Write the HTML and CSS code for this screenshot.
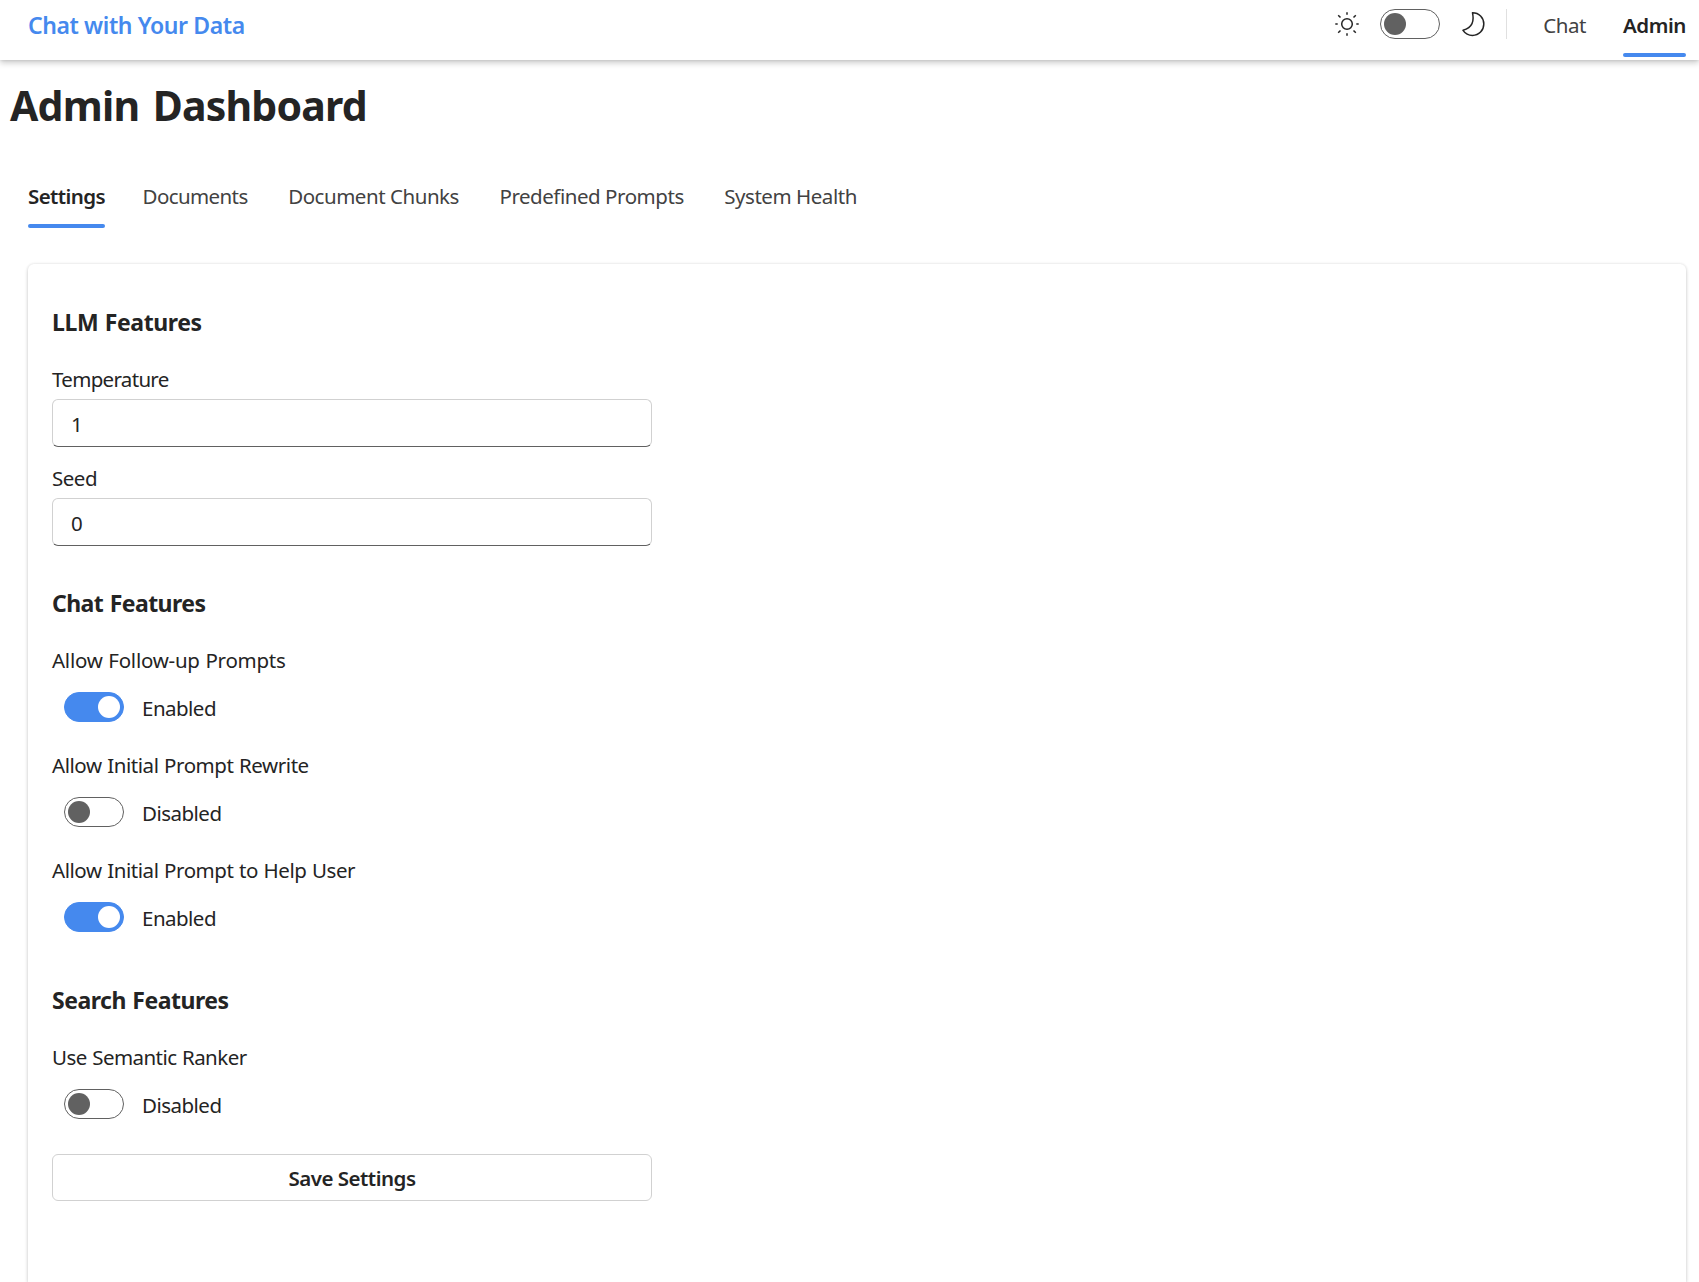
FILE: index.html
```html
<!DOCTYPE html>
<html lang="en">
<head>
<meta charset="utf-8">
<title>Chat with Your Data</title>
<link rel="stylesheet" href="styles.css">
</head>
<body>
<header class="topbar">
  <div class="brand">Chat with Your Data</div>
  <div class="theme">
    <svg class="sun" viewBox="0 0 24 24"><circle cx="12" cy="12" r="5.3"/><path d="M12 .3v2.4M12 21.3v2.4M.3 12h2.4M21.3 12h2.4M3.2 3.2l2.3 2.3M18.500 18.500l2.300 2.300M3.200 20.800l2.300-2.300M18.500 5.500l2.300-2.300"/></svg>
    <span class="switch"></span>
    <svg class="moon" viewBox="0 0 24 26"><path d="M10.500 1.800C17 1.800 21.800 6.700 21.800 13S17 24.400 10.500 24.400C6.500 24.400 3.200 22.500 1 19.300 5.500 17.900 8.500 15.900 10 12.600 11.500 9.200 11.300 5.500 10.500 1.800Z"/></svg>
  </div>
  <nav class="nav">
    <a class="tab chat-link">Chat</a>
    <a class="tab selected">Admin</a>
  </nav>
</header>
<main>
  <h1 class="title">Admin Dashboard</h1>
  <nav class="tabs">
    <a class="tab selected">Settings</a>
    <a class="tab documents">Documents</a>
    <a class="tab">Document Chunks</a>
    <a class="tab">Predefined Prompts</a>
    <a class="tab">System Health</a>
  </nav>
  <section class="card">
    <h2 class="heading llm">LLM Features</h2>
    <label class="label temperature">Temperature</label>
    <div class="input">1</div>
    <label class="label seed">Seed</label>
    <div class="input">0</div>
    <h2 class="heading chat">Chat Features</h2>
    <div class="label follow-up">Allow Follow-up Prompts</div>
    <div class="option"><span class="switch on"></span><span class="state">Enabled</span></div>
    <div class="label">Allow Initial Prompt Rewrite</div>
    <div class="option"><span class="switch"></span><span class="state">Disabled</span></div>
    <div class="label">Allow Initial Prompt to Help User</div>
    <div class="option"><span class="switch on"></span><span class="state">Enabled</span></div>
    <h2 class="heading search">Search Features</h2>
    <div class="label ranker">Use Semantic Ranker</div>
    <div class="option"><span class="switch"></span><span class="state">Disabled</span></div>
    <button class="save">Save Settings</button>
  </section>
</main>
</body>
</html>
```
FILE: styles.css
```css
* { box-sizing: border-box; }
body {
  margin: 0;
  height: 1282px;
  overflow: hidden;
  display: flex;
  flex-direction: column;
  background: #fff;
  color: #242424;
  font: 20.5px/30px "Noto Sans", "Open Sans", sans-serif;
}
h1, h2 { margin: 0; }

/* Header */
.topbar {
  height: 60px;
  flex: none;
  display: flex;
  align-items: flex-start;
  padding: 0 13px 0 28px;
  box-shadow: 0 0 3px rgba(0,0,0,.12), 0 3px 6px rgba(0,0,0,.2);
}
.brand {
  flex: 1;
  padding-top: 10px;
  font-size: 23px;
  font-weight: 600;
  letter-spacing: -.4px;
  color: #4589ee;
  white-space: nowrap;
}
.theme {
  display: flex;
  align-items: center;
  height: 30px;
  margin-top: 9px;
  padding-right: 20px;
  border-right: 1px solid #e0e0e0;
}
.sun, .moon { fill: none; stroke: #242424; stroke-width: 1.5; stroke-linejoin: round; }
.sun { width: 24px; height: 24px; margin-right: 21px; }
.moon { width: 24px; height: 26px; margin-left: 22px; }
.nav { display: flex; gap: 37px; margin-left: 36px; padding-top: 10px; }

/* Switches */
.switch {
  display: block;
  flex: none;
  width: 60px;
  height: 30px;
  padding: 2.6px;
  border: 1px solid #616161;
  border-radius: 15px;
}
.switch::before {
  content: "";
  display: block;
  width: 22px;
  height: 22px;
  border-radius: 50%;
  background: #616161;
}
.switch.on { background: #4589ee; border-color: #4589ee; }
.switch.on::before { background: #fff; margin-left: 30px; }

/* Tabs */
.tab { display: block; color: #424242; letter-spacing: -.46px; white-space: nowrap; }
.tab.selected { color: #242424; font-weight: 600; letter-spacing: -.44px; }
.tab.selected::after {
  content: "";
  display: block;
  height: 4px;
  margin-top: 13px;
  border-radius: 2px;
  background: #4589ee;
}
main { flex: 1; min-height: 0; display: flex; flex-direction: column; }
.title { margin-top: 15px; padding-left: 10px; font-size: 41px; line-height: 60px; letter-spacing: -.78px; word-spacing: 3.5px; }
.tabs { display: flex; gap: 40.5px; height: 129px; padding: 46px 0 0 28px; }
.tabs .selected { letter-spacing: -.59px; }
.tabs .documents { margin-left: -3px; letter-spacing: -.6px; }

/* Settings card */
.card {
  flex: 1;
  margin: 0 13px 0 28px;
  padding: 42px 24px 0;
  border-radius: 6px 6px 0 0;
  box-shadow: 0 0 3px rgba(0,0,0,.12), 0 2px 4px rgba(0,0,0,.14);
}
.heading { height: 58px; font-size: 23px; line-height: 32px; letter-spacing: -.55px; word-spacing: 1px; }
.llm { letter-spacing: -.4px; }
.chat { margin-top: 41px; }
.search { margin-top: 24px; letter-spacing: -.49px; }
.label { display: block; height: 35px; letter-spacing: -.44px; word-spacing: .7px; }
.temperature { letter-spacing: -.68px; }
.seed { margin-top: 16px; letter-spacing: -.5px; }
.follow-up { letter-spacing: -.25px; }
.ranker { letter-spacing: -.55px; }
.input {
  width: 600px;
  height: 48px;
  padding: 9px 18px;
  border: 1px solid #d1d1d1;
  border-bottom-color: #616161;
  border-radius: 6px;
}
.option { display: flex; align-items: flex-start; height: 70px; padding: 12px 12px 0; }
.state { margin: 1px 0 0 18px; letter-spacing: -.52px; }
.save {
  display: block;
  width: 600px;
  height: 47px;
  margin-top: 7px;
  padding: 0;
  font: inherit;
  font-weight: 600;
  letter-spacing: -.5px;
  color: #242424;
  background: #fff;
  border: 1px solid #d1d1d1;
  border-radius: 6px;
}
```
